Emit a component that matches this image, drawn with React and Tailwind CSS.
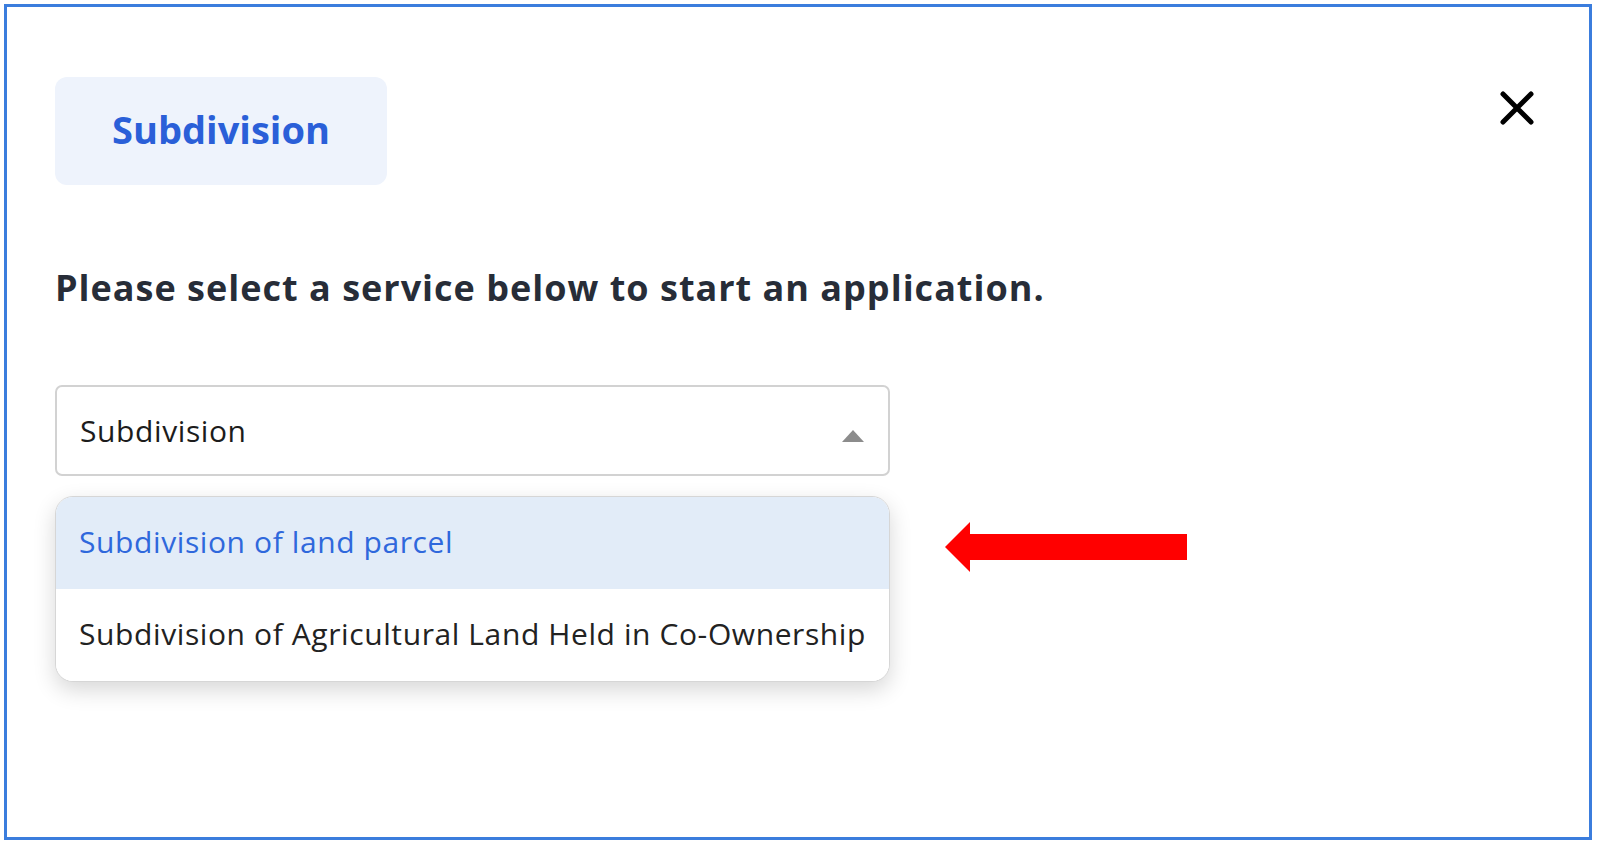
import React from 'react';

const options = [
  { label: 'Subdivision of land parcel', active: true },
  { label: 'Subdivision of Agricultural Land Held in Co-Ownership', active: false },
];

const App = () => {
  return (
    <div className="w-[1600px] h-[847px] bg-white p-[4px] font-['Open_Sans','Noto_Sans',sans-serif]">
      <div className="h-[836px] w-[1588px] border-[3px] border-[#3b7ddd] pl-[48px] pr-[55px] pt-[70px]">
        {/* Header */}
        <div className="flex items-start justify-between">
          <div className="flex h-[108px] w-[332px] items-center justify-center rounded-[12px] bg-[#eef3fc] pb-[4px]">
            <span className="text-[38px] font-bold text-[#2a5fd8]">Subdivision</span>
          </div>
          <button className="mt-[14px] text-black">
            <svg width="34" height="34" viewBox="0 0 34 34" fill="none">
              <path d="M3 3L31 31M31 3L3 31" stroke="currentColor" strokeWidth="5" strokeLinecap="round" />
            </svg>
          </button>
        </div>

        <h1 className="mt-[80px] text-[36px] font-bold leading-[46px] tracking-[1px] text-[#272d38]">
          Please select a service below to start an application.
        </h1>

        {/* Select */}
        <div className="mt-[74px] flex h-[91px] w-[835px] items-center justify-between rounded-[7px] border-2 border-[#d2d2d2] pl-[23px] pr-[24px]">
          <span className="text-[30px] tracking-[0.6px] text-[#1c1c1c]">Subdivision</span>
          <svg width="22" height="12" viewBox="0 0 22 12" className="mt-[10px]">
            <path d="M0 12L11 0L22 12Z" fill="#8c8c8c" />
          </svg>
        </div>

        <div className="mt-[20px] flex items-start">
          {/* Dropdown menu */}
          <div className="w-[835px] overflow-hidden rounded-[18px] border border-[#d6d6d6] bg-white shadow-[0_8px_22px_rgba(0,0,0,0.16)]">
            {options.map((opt) => (
              <div
                key={opt.label}
                className={`flex h-[92px] items-center pb-[4px] pl-[23px] text-[30px] tracking-[0.6px] ${
                  opt.active ? 'bg-[#e2ecf8] text-[#2f68dc]' : 'bg-white text-[#222222]'
                }`}
              >
                {opt.label}
              </div>
            ))}
          </div>

          {/* Red annotation arrow */}
          <svg width="244" height="50" viewBox="0 0 244 50" className="ml-[55px] mt-[26px]">
            <path d="M0 25L25 0V12H242V38H25V50Z" fill="#ff0000" />
          </svg>
        </div>
      </div>
    </div>
  );
};

export default App;
